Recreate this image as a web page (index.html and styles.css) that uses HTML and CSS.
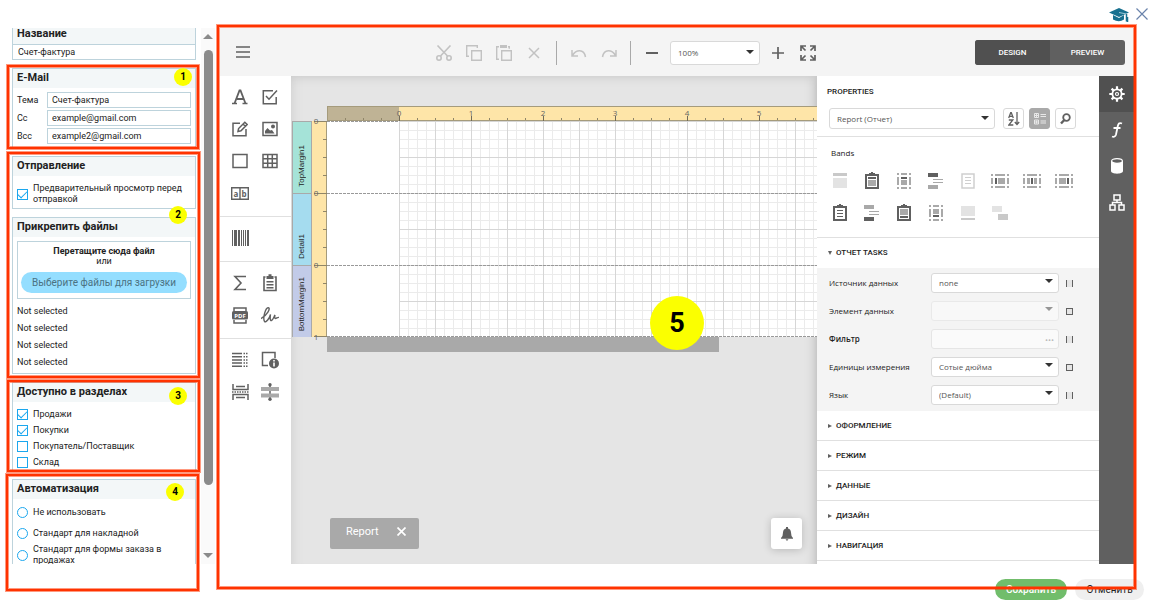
FILE: index.html
```html
<!DOCTYPE html>
<html lang="ru">
<head>
<meta charset="utf-8">
<title>Счет-фактура</title>
<link rel="stylesheet" href="styles.css">
</head>
<body>
<div class="app">
  <header class="topbar">
    <button class="icon-btn" aria-label="Обучение"><svg width="20" height="14" viewBox="0 0 20 14"><path d="M0 4.500 10 0l10 4.500L10 9z" fill="#17708f"/><path d="M4 7v4.500q6 3.500 11 0V7l-5 3z" fill="#17708f"/><path d="M10 4.500 17.500 6v4" fill="none" stroke="#9cc9d8"/><path d="M17.500 6v7.500M18.500 9v5" fill="none" stroke="#17708f" stroke-width="1.500"/></svg></button>
    <button class="icon-btn" aria-label="Закрыть"><svg width="12" height="12" viewBox="0 0 12 12"><path d="M.5.5l11 11M11.500.5l-11 11" stroke="#6a83ab" stroke-width="1.200"/></svg></button>
  </header>

  <div class="main">
    <aside class="settings">
      <div class="cards">
        <section class="card name-card">
          <h2><label for="name">Название</label></h2>
          <input class="field" id="name" value="Счет-фактура">
        </section>

        <section class="card mail-card">
          <h2>E-Mail</h2>
          <div class="mail-grid">
            <label for="subj">Тема</label><input class="field" id="subj" value="Счет-фактура">
            <label for="cc">Cc</label><input class="field" id="cc" value="example@gmail.com">
            <label for="bcc">Bcc</label><input class="field" id="bcc" value="example2@gmail.com">
          </div>
        </section>

        <section class="card send-card">
          <h2>Отправление</h2>
          <label class="check"><input type="checkbox" checked><span>Предварительный просмотр перед отправкой</span></label>
        </section>

        <section class="card files-card">
          <h2>Прикрепить файлы</h2>
          <div class="drop">
            <b>Перетащите сюда файл</b>
            <span>или</span>
            <button class="pick">Выберите файлы для загрузки</button>
          </div>
          <ul class="files">
            <li>Not selected</li><li>Not selected</li><li>Not selected</li><li>Not selected</li>
          </ul>
        </section>

        <section class="card areas-card">
          <h2>Доступно в разделах</h2>
          <div class="checks">
            <label class="check"><input type="checkbox" checked><span>Продажи</span></label>
            <label class="check"><input type="checkbox" checked><span>Покупки</span></label>
            <label class="check"><input type="checkbox"><span>Покупатель/Поставщик</span></label>
            <label class="check"><input type="checkbox"><span>Склад</span></label>
          </div>
        </section>

        <section class="card auto-card">
          <h2>Автоматизация</h2>
          <div class="radios">
            <label class="check"><input type="radio" name="auto"><span>Не использовать</span></label>
            <label class="check"><input type="radio" name="auto"><span>Стандарт для накладной</span></label>
            <label class="check"><input type="radio" name="auto"><span>Стандарт для формы заказа в продажах</span></label>
          </div>
        </section>
      </div>
      <div class="scrollbar"><i class="up"></i><i class="thumb"></i><i class="down"></i></div>
    </aside>

    <div class="designer">
      <div class="toolbar">
        <button class="tool menu" aria-label="Меню"><svg width="14" height="12" viewBox="0 0 14 12"><path d="M0 1h14M0 6h14M0 11h14" stroke="#606060" stroke-width="1.600"/></svg></button>
        <div class="tools">
          <button class="tool" aria-label="Вырезать"><svg width="16" height="16" viewBox="0 0 16 16" fill="none" stroke="#c2c2c2" stroke-width="1.600"><circle cx="3" cy="13" r="2.200"/><circle cx="13" cy="13" r="2.200"/><path d="M1.500.5 11.500 11M14.500.5 4.500 11"/></svg></button>
          <button class="tool" aria-label="Копировать"><svg width="16" height="16" viewBox="0 0 16 16" fill="none" stroke="#c2c2c2" stroke-width="1.400"><path d="M5.700 5.700h9.600v9.600H5.700zM3 11.300H.7V.7h10.600V3"/></svg></button>
          <button class="tool" aria-label="Вставить"><svg width="16" height="16" viewBox="0 0 16 16" fill="none" stroke="#c2c2c2" stroke-width="1.400"><path d="M5.700 5.700h9.600v9.600H5.700zM3 14.300H.7V1.700H3M12 1.700h1.300v2"/><path d="M4 0h7v3H4z" fill="#c2c2c2" stroke="none"/></svg></button>
          <button class="tool" aria-label="Удалить"><svg width="12" height="12" viewBox="0 0 12 12"><path d="M1 1l10 10M11 1 1 11" stroke="#c2c2c2" stroke-width="1.500"/></svg></button>
          <i class="sep"></i>
          <button class="tool" aria-label="Отменить действие"><svg width="16" height="10" viewBox="0 0 16 10" fill="none" stroke="#c2c2c2" stroke-width="1.500"><path d="M1 2v6h6M1.500 7.500C5 1.500 13 .5 14.500 9"/></svg></button>
          <button class="tool" aria-label="Повторить"><svg width="16" height="10" viewBox="0 0 16 10" fill="none" stroke="#c2c2c2" stroke-width="1.500"><path d="M15 2v6H9M14.500 7.500C11 1.500 3 .5 1.500 9"/></svg></button>
          <i class="sep last"></i>
          <button class="tool zoom-out" aria-label="Уменьшить"><svg width="12" height="12" viewBox="0 0 12 12"><path d="M0 6h12" stroke="#606060" stroke-width="2"/></svg></button>
          <span class="select zoom"><select aria-label="Масштаб"><option>100%</option></select></span>
          <button class="tool zoom-in" aria-label="Увеличить"><svg width="12" height="12" viewBox="0 0 12 12"><path d="M0 6h12M6 0v12" stroke="#606060" stroke-width="1.700"/></svg></button>
          <button class="tool" aria-label="Во весь экран"><svg width="16" height="16" viewBox="0 0 16 16" fill="none" stroke="#606060" stroke-width="1.700"><path d="M1 6V1h5M10 1h5v5M15 10v5h-5M6 15H1v-5M1 1l4.500 4.500M15 1l-4.500 4.500M15 15l-4.500-4.500M1 15l4.500-4.500"/></svg></button>
        </div>
        <div class="mode"><button class="on">DESIGN</button><button>PREVIEW</button></div>
      </div>

      <div class="work">
        <nav class="toolbox">
          <div class="group">
            <button aria-label="Label"><svg width="16" height="16" viewBox="0 0 16 16" fill="none" stroke="#606060"><path d="M2.500 14.500 7.500 1.500h1l5 13M5 10h6.500" stroke-width="1.800"/><path d="M0 14.500h5M10.500 14.500h5" stroke-width="1.500"/></svg></button>
            <button aria-label="Check Box"><svg width="16" height="16" viewBox="0 0 16 16" fill="none" stroke="#606060" stroke-width="1.500"><path d="M11 1.800H1.300v12.900h12.900V8"/><path d="M4 7l3 3.200L15 1.500"/></svg></button>
            <button aria-label="Rich Text"><svg width="16" height="16" viewBox="0 0 16 16" fill="none" stroke="#606060" stroke-width="1.500"><path d="M8 2.300H1v12.400h13V8"/><path d="M6 10.500l.6-3L12.800 1.200l2.300 2.300L9 9.800zM11 3l2.300 2.300"/></svg></button>
            <button aria-label="Picture Box"><svg width="16" height="16" viewBox="0 0 16 16"><path d="M1 1.500h14v13H1z" fill="none" stroke="#606060" stroke-width="1.500"/><circle cx="11" cy="5.500" r="2" fill="#606060"/><path d="M3 12.500V10l2.500-3L8 9.500 10 9l2.500 3.500z" fill="#606060"/></svg></button>
            <button aria-label="Panel"><svg width="16" height="16" viewBox="0 0 16 16"><path d="M1 1.500h14v13H1z" fill="none" stroke="#606060" stroke-width="1.500"/></svg></button>
            <button aria-label="Table"><svg width="16" height="16" viewBox="0 0 16 16"><path d="M1 1.500h14v13H1zM1 5.800h14M1 10.200h14M5.700 1.500v13M10.300 1.500v13" fill="none" stroke="#606060" stroke-width="1.500"/></svg></button>
            <button aria-label="Character Comb"><svg width="18" height="13" viewBox="0 0 18 13"><path d="M.7.7h16.600v11.600H.7zM9 .7v11.600" fill="none" stroke="#606060" stroke-width="1.400"/><g class="comb"><text x="2.500" y="9.500">a</text><text x="10.500" y="9.500">b</text></g></svg></button>
          </div>
          <div class="group">
            <button aria-label="Barcode"><svg width="18" height="16" viewBox="0 0 18 16" fill="#606060"><path d="M1 0h1v16H1zM3 0h3v16H3zM7 0h2v16H7zM10 0h1v16h-1zM12 0h1v16h-1zM14 0h1v16h-1zM16 0h2v16h-2z"/></svg></button>
          </div>
          <div class="group">
            <button aria-label="Summary"><svg width="16" height="16" viewBox="0 0 16 16"><path d="M14 1.500H3l6 6.500-6 6.500h11" fill="none" stroke="#606060" stroke-width="1.600"/></svg></button>
            <button aria-label="Subreport"><svg width="16" height="18" viewBox="0 0 16 18"><path d="M3.500 3H2v13.500h12V3h-1.500" fill="none" stroke="#606060" stroke-width="1.600"/><path d="M4.500 2H6.500V.3h3V2h2v3h-7zM4.500 7h7v1.400h-7zM4.500 10h7v1.400h-7zM4.500 13h7v1.400h-7z" fill="#606060"/></svg></button>
            <button aria-label="PDF Content"><svg width="16" height="17" viewBox="0 0 16 17"><path d="M2 4V1h12v3M2 13v3h12v-3" fill="none" stroke="#606060" stroke-width="1.500"/><rect y="4" width="16" height="8.500" rx="1.500" fill="#606060"/><text class="pdf" x="8" y="10.500">PDF</text></svg></button>
            <button aria-label="Signature"><svg width="18" height="16" viewBox="0 0 18 16"><path d="M0 11.500C6 8.500 10 1 7.300.7S1.500 11 3.500 14.500C5 16 8.500 11.500 9.500 7.500 9 11 9 14 10.500 13.500s2.500-4 3.500-5.500c-.5 2-.5 3.500.5 3.500S17 10 18 10.500" fill="none" stroke="#606060" stroke-width="1.400"/></svg></button>
          </div>
          <div class="group">
            <button aria-label="Table of Contents"><svg width="16" height="16" viewBox="0 0 16 16" stroke="#606060" stroke-width="1.500"><path d="M0 1.500h10M0 4.700h10M0 7.900h10M0 11.100h10M0 14.300h10"/><path d="M11.500 1.500h4.500M11.500 4.700h4.500M11.500 7.900h4.500M11.500 11.100h4.500M11.500 14.300h4.500" stroke-dasharray="1.500 1"/></svg></button>
            <button aria-label="Page Info"><svg width="18" height="18" viewBox="0 0 18 18"><path d="M14 7V1.500H1.500v13H7" fill="none" stroke="#606060" stroke-width="1.500"/><circle cx="13" cy="12.500" r="5" fill="#606060"/><path d="M13 9v1.500M13 11.500v4" stroke="#fff" stroke-width="1.600"/></svg></button>
            <button aria-label="Page Break"><svg width="17" height="18" viewBox="0 0 17 18" fill="none" stroke="#606060" stroke-width="1.500"><path d="M1 1v5.500h15V1M4 3.500h9M1 17v-5.500h15V17M4 14.500h9"/><path d="M0 9h17" stroke-dasharray="1.500 1"/></svg></button>
            <button aria-label="Cross-band"><svg width="18" height="18" viewBox="0 0 18 18"><path d="M9 1v16" stroke="#606060" stroke-width="1.500"/><path d="M0 4h18v4H0zM0 10.500h18v4H0z" fill="#a9a9a9"/><circle cx="9" cy="1.700" r="1.700" fill="#606060"/><circle cx="9" cy="16.300" r="1.700" fill="#606060"/></svg></button>
          </div>
        </nav>

        <main class="canvas">
          <div class="sheet">
            <div class="ruler-top">
              <svg width="100%" height="15">
                <defs><pattern id="ticks" width="18" height="15" patternUnits="userSpaceOnUse"><path d="M.5 12v3" stroke="#8f8568"/></pattern></defs>
                <rect width="100%" height="15" fill="#fee5a8"/><rect width="72" height="15" fill="#bfb395"/>
                <rect width="100%" height="15" fill="url(#ticks)"/>
                <path d="M0 .5h2000M0 14.500h2000M.5 0v15" stroke="#a59b7c"/>
                <path d="M72.500 10v5M144.500 10v5M216.500 10v5M288.500 10v5M360.500 10v5M432.500 10v5" stroke="#706a58"/>
                <g class="num"><text x="72" y="10">0</text><text x="144" y="10">1</text><text x="216" y="10">2</text><text x="288" y="10">3</text><text x="360" y="10">4</text><text x="432" y="10">5</text></g>
              </svg>
            </div>
            <div class="bands">
              <div class="band top"><span>TopMargin1</span></div>
              <div class="band detail"><span>Detail1</span></div>
              <div class="band bottom"><span>BottomMargin1</span></div>
            </div>
            <svg class="ruler-side" width="15" height="216">
              <rect width="15" height="216" fill="#fee5a8"/>
              <path d="M14.500 0v216" stroke="#a59b7c"/>
              <path d="M11 18.500h4M11 36.500h4M11 54.500h4M11 90.500h4M11 108.500h4M11 126.500h4M11 162.500h4M11 180.500h4M11 198.500h4M2 .5h13M2 72.500h13M2 144.500h13M2 215.500h13" stroke="#8f8568"/>
              <g class="num"><text x="4" y="3">0</text><text x="4" y="75">0</text><text x="4" y="147">0</text><text x="4" y="219">1</text></g>
            </svg>
            <svg class="page" width="100%" height="216">
              <defs>
                <pattern id="fine" width="9" height="9" patternUnits="userSpaceOnUse"><path d="M.5 0v9M0 .5h9" stroke="#ebebeb"/></pattern>
                <pattern id="major" width="36" height="36" patternUnits="userSpaceOnUse"><path d="M.5 0v36M0 .5h36" stroke="#d6d6d6"/></pattern>
              </defs>
              <rect width="100%" height="216" fill="#fff"/>
              <rect x="72" width="100%" height="216" fill="url(#fine)"/>
              <rect x="72" width="100%" height="216" fill="url(#major)"/>
              <path d="M0 .5h72M0 72.500h2000M0 144.500h2000M0 215.500h2000" stroke="#999" stroke-dasharray="3 1"/>
            </svg>
            <div class="hscroll"><i></i></div>
          </div>
          <div class="canvas-foot">
            <div class="tab"><span>Report</span><button aria-label="Закрыть вкладку"><svg width="9" height="9" viewBox="0 0 9 9"><path d="M.5.5l8 8M8.500.5l-8 8" stroke="#fff" stroke-width="1.700"/></svg></button></div>
            <button class="bell" aria-label="Уведомления"><svg width="12" height="14" viewBox="0 0 12 14" fill="#606060"><path d="M0 11q2-1.500 2-5.500Q2.200 2 5 1.500V0h2v1.500Q9.800 2 10 5.500q0 4 2 5.500v.8H0zM4.500 12.300h3L6 14z"/></svg></button>
          </div>
        </main>

        <section class="props">
          <div class="props-top">
            <h3>PROPERTIES</h3>
            <div class="props-pick">
              <span class="select"><select aria-label="Элемент"><option>Report (Отчет)</option></select></span>
              <button aria-label="Сортировка"><svg width="12" height="14" viewBox="0 0 12 14" fill="none" stroke="#606060" stroke-width="1.300"><path d="M.7 6 2.700.7h.6L5.300 6M1.500 4.300h3M.8 8h4L.8 13h4.500M9 0v12M6.800 10 9 12.500 11.200 10"/></svg></button>
              <button class="on" aria-label="По категориям"><svg width="12" height="12" viewBox="0 0 12 12" fill="none" stroke="#e8e8e8"><path d="M.5.5h4v4h-4zM.5 7h4v4h-4zM2.500 1v3M1 2.500h3M2.500 7.500v3M1 9h3M6.500 1.500H12M6.500 3.500H12M6.500 8H12M6.500 10H12"/></svg></button>
              <button aria-label="Поиск"><svg width="11" height="12" viewBox="0 0 11 12" fill="none" stroke="#606060"><circle cx="6.500" cy="4.500" r="3.300" stroke-width="1.800"/><path d="M4.300 7 1 10.500" stroke-width="2.400"/></svg></button>
            </div>
          </div>
          <div class="bands-box">
            <h4>Bands</h4>
            <div class="band-icons">
              <svg viewBox="0 0 18 18"><path fill="#c9c9c9" d="M2 1h14v3H2z"/><path fill="#e3e3e3" d="M2 6h14v10H2z"/></svg>
              <svg viewBox="0 0 18 18"><path fill="none" stroke="#606060" stroke-width="2" d="M3 3h12v13H3z"/><path fill="#606060" d="M6 1h2V0h2v1h2v3H6zM5 5h8v2H5z"/><path fill="#a9a9a9" d="M5 8h8v6H5z"/></svg>
              <svg viewBox="0 0 18 18"><path fill="#a9a9a9" d="M2 1h2v2H2zM6 1h6v2H6zM14 1h2v2h-2zM2 5h2v8H2zM6 8h6v5H6zM14 5h2v8h-2zM2 15h2v2H2zM6 15h6v2H6zM14 15h2v2h-2z"/><path fill="#606060" d="M6 5h6v2H6z"/></svg>
              <svg viewBox="0 0 18 18"><path fill="#606060" d="M1 1h10v4H1z"/><path fill="#a9a9a9" d="M6 7h10v1H6zM6 10h10v1H6zM1 13h10v4H1z"/></svg>
              <svg viewBox="0 0 18 18"><path fill="none" stroke="#cfcfcf" stroke-width="1.500" d="M3 2h12v14H3z"/><path fill="#cfcfcf" d="M6 5h6v1H6zM6 8h6v1H6zM6 11h6v1H6z"/></svg>
              <svg viewBox="0 0 18 18"><path fill="#a9a9a9" d="M0 2h2v2H0zM4 2h10v2H4zM16 2h2v2h-2zM0 6h2v6H0zM7 6h7v6H7zM16 6h2v6h-2zM0 14h2v2H0zM4 14h10v2H4zM16 14h2v2h-2z"/><path fill="#606060" d="M4 6h2v6H4z"/></svg>
              <svg viewBox="0 0 18 18"><path fill="#a9a9a9" d="M0 2h2v2H0zM4 2h10v2H4zM16 2h2v2h-2zM0 6h2v6H0zM4 6h3v6H4zM11 6h3v6h-3zM16 6h2v6h-2zM0 14h2v2H0zM4 14h10v2H4zM16 14h2v2h-2z"/><path fill="#606060" d="M8 6h2v6H8z"/></svg>
              <svg viewBox="0 0 18 18"><path fill="#a9a9a9" d="M0 2h2v2H0zM4 2h10v2H4zM16 2h2v2h-2zM0 6h2v6H0zM4 6h7v6H4zM16 6h2v6h-2zM0 14h2v2H0zM4 14h10v2H4zM16 14h2v2h-2z"/><path fill="#606060" d="M12 6h2v6h-2z"/></svg>
              <svg viewBox="0 0 18 18"><path fill="none" stroke="#606060" stroke-width="2" d="M3 3h12v13H3z"/><path fill="#606060" d="M6 1h2V0h2v1h2v3H6zM6 6h6v1H6zM6 9h6v1H6zM6 12h6v1H6z"/></svg>
              <svg viewBox="0 0 18 18"><path fill="#606060" d="M1 13h10v4H1z"/><path fill="#a9a9a9" d="M6 7h10v1H6zM6 10h10v1H6zM1 1h10v4H1z"/></svg>
              <svg viewBox="0 0 18 18"><path fill="none" stroke="#606060" stroke-width="2" d="M3 3h12v13H3z"/><path fill="#606060" d="M6 1h2V0h2v1h2v3H6zM5 12h8v2H5z"/><path fill="#a9a9a9" d="M5 5h8v6H5z"/></svg>
              <svg viewBox="0 0 18 18"><path fill="#a9a9a9" d="M2 1h2v2H2zM6 1h6v2H6zM14 1h2v2h-2zM2 5h2v8H2zM6 5h6v5H6zM14 5h2v8h-2zM2 15h2v2H2zM6 15h6v2H6zM14 15h2v2h-2z"/><path fill="#606060" d="M6 11h6v2H6z"/></svg>
              <svg viewBox="0 0 18 18"><path fill="#e3e3e3" d="M2 2h14v10H2z"/><path fill="#c9c9c9" d="M2 14h14v2H2z"/></svg>
              <svg viewBox="0 0 18 18"><path fill="#e3e3e3" d="M1 2h10v6H1z"/><path fill="#c9c9c9" d="M7 10h10v6H7z"/></svg>
            </div>
          </div>
          <button class="acc open">ОТЧЕТ TASKS</button>
          <div class="form">
            <label for="src">Источник данных</label><span class="select"><select id="src"><option>none</option></select></span><i class="mark side"></i>
            <label for="member">Элемент данных</label><span class="select off"><select id="member" disabled></select></span><i class="mark"></i>
            <label class="strong" for="filter">Фильтр</label><input class="filter" id="filter" placeholder="•••" disabled><i class="mark side"></i>
            <label for="units">Единицы измерения</label><span class="select"><select id="units"><option>Сотые дюйма</option></select></span><i class="mark"></i>
            <label for="lang">Язык</label><span class="select"><select id="lang"><option>(Default)</option></select></span><i class="mark side"></i>
          </div>
          <button class="acc">ОФОРМЛЕНИЕ</button>
          <button class="acc">РЕЖИМ</button>
          <button class="acc">ДАННЫЕ</button>
          <button class="acc">ДИЗАЙН</button>
          <button class="acc">НАВИГАЦИЯ</button>
        </section>

        <nav class="rail">
          <button class="on" aria-label="Свойства"><svg width="16" height="16" viewBox="0 0 16 16" fill="none" stroke="#fff"><circle cx="8" cy="8" r="4.600" stroke-width="1.800"/><circle cx="8" cy="8" r="1.500" stroke-width="1.200"/><path d="M8 .3v3M8 12.700v3M.3 8h3M12.700 8h3M2.600 2.600l2 2M11.400 11.400l2 2M13.400 2.600l-2 2M4.600 11.400l-2 2" stroke-width="2.200"/></svg></button>
          <button aria-label="Выражения"><svg width="12" height="16" viewBox="0 0 12 16" fill="none" stroke="#fff" stroke-width="1.800"><path d="M11 1.500C8 .2 7.300 2 6.800 4L5 12.500C4.500 14.500 3 15.300 1 14.500M2.500 6h7"/></svg></button>
          <button aria-label="Источники"><svg width="12" height="16" viewBox="0 0 12 16"><path d="M0 3v10c0 3.500 12 3.500 12 0V3z" fill="#fff"/><ellipse cx="6" cy="3" rx="5.400" ry="2.300" fill="#606060" stroke="#fff" stroke-width="1.200"/></svg></button>
          <button aria-label="Структура"><svg width="16" height="17" viewBox="0 0 16 17" fill="none" stroke="#fff" stroke-width="1.500"><path d="M5 1h6v5H5zM1 11h5v5H1zM10 11h5v5h-5zM8 6v2.500M3.500 11V8.500h9V11"/></svg></button>
        </nav>
      </div>
    </div>
  </div>

  <footer class="foot"><button class="save">Сохранить</button><button>Отменить</button></footer>
</div>

<div class="frame f1"></div><div class="frame f2"></div><div class="frame f3"></div><div class="frame f4"></div><div class="frame f5"></div>
<span class="badge b1">1</span><span class="badge b2">2</span><span class="badge b3">3</span><span class="badge b4">4</span><span class="badge b5">5</span>
</body>
</html>
```

FILE: styles.css
```css
* { box-sizing: border-box; }
body { margin: 0; background: #fff; color: #222; font: 9px/11px Roboto, "Liberation Sans", sans-serif; overflow: hidden; }
button { border: 0; padding: 0; background: none; font: inherit; color: inherit; cursor: pointer; }
h2, h3, h4, ul { margin: 0; padding: 0; list-style: none; }
svg { display: block; }

.app { display: flex; flex-direction: column; height: 100vh; }
.topbar { flex: none; height: 28px; padding: 8px 8px 0 0; display: flex; justify-content: flex-end; align-items: flex-start; gap: 7px; }
.main { flex: 1; min-height: 0; display: flex; }

/* Settings column */
.settings { flex: none; width: 220px; padding-left: 12px; display: flex; gap: 5px; overflow: hidden; }
.cards { width: 184px; height: 100%; overflow: hidden; display: flex; flex-direction: column; gap: 8px; }
.card { flex: none; border: 1px solid #bdd3dc; }
.card h2 { height: 19px; padding-left: 4px; background: #f3f7f8; font-size: 11px; line-height: 18px; font-weight: 700; }
.name-card { margin-top: -4px; }
.field { width: 100%; height: 16px; padding: 0 4px; border: 1px solid #bdd3dc; background: #fff; font: inherit; color: inherit; }
.name-card .field { display: block; height: 15px; border-width: 1px 0 0; padding-left: 5px; }
.mail-grid { display: grid; grid-template-columns: 30px 1fr; gap: 2px 0; align-items: center; padding: 4px 4px 3px; }
.check { display: flex; align-items: center; gap: 5px; }
.check input { appearance: none; flex: none; width: 11px; height: 11px; margin: 0; border: 1px solid #1ba7ee; background: #fff; display: grid; place-items: center; }
.check input[type=radio] { border-radius: 50%; }
.check input:checked::after { content: ""; width: 8px; height: 4px; margin-bottom: 2px; border: solid #1ba7ee; border-width: 0 0 1px 1px; transform: rotate(-45deg); }
.send-card .check { padding: 7px 4px 3px; }
.drop { margin: 4px 4px 0; height: 58px; border: 1px solid #bdd3dc; display: flex; flex-direction: column; align-items: center; padding: 4px 3px; line-height: 10px; }
.pick { width: 100%; height: 21px; margin-top: 6px; border-radius: 11px; background: #94deff; color: #4b7282; font-size: 10px; }
.files { padding: 4px 4px 2px; line-height: 17px; }
.checks { padding: 4px; display: grid; grid-auto-rows: 16px; }
.areas-card { height: 89px; }
.radios { padding: 3px 16px 3px 4px; display: flex; flex-direction: column; }
.radios .check { min-height: 21px; }
.scrollbar { width: 14px; padding: 6px 0 6px; background: #fafafa; display: flex; flex-direction: column; align-items: center; }
.up, .down { border: 5px solid transparent; }
.up { border-top: 0; border-bottom-color: #8b8b8b; }
.down { border-bottom: 0; border-top-color: #8b8b8b; margin-top: auto; }
.thumb { width: 9px; height: 83%; margin-top: 11px; border-radius: 5px; background: #8b8b8b; }

/* Designer */
.designer { flex: 1; min-width: 0; margin-right: 22px; display: flex; flex-direction: column; }
.toolbar { flex: none; height: 48px; padding: 0 9px 0 8px; background: #f4f4f4; display: flex; align-items: center; }
.tool { flex: none; width: 30px; height: 30px; display: grid; place-items: center; }
.tools { margin-left: 171px; padding-top: 2px; display: flex; align-items: center; }
.sep { width: 1px; height: 24px; margin: 0 7px; background: #a9a9a9; }
.sep.last { margin: 0 6px; }
.select { position: relative; display: block; height: 20px; }
.select::after { content: ""; position: absolute; right: 6px; top: 6px; border: 4px solid transparent; border-top-color: #333; border-bottom: 0; pointer-events: none; }
.select select { appearance: none; width: 100%; height: 100%; padding: 0 7px; border: 1px solid #d9d9d9; border-radius: 3px; background: #fff; color: #555; font: 8px/12px "Open Sans", sans-serif; }
.select.zoom { width: 90px; height: 24px; margin: 0 3px; }
.zoom.select::after { top: 9px; }
.mode { width: 150px; height: 25px; margin-left: auto; display: flex; border-radius: 3px; overflow: hidden; background: #606060; color: #fff; font-size: 8px; font-weight: 500; }
.mode button { flex: 1; }
.mode .on { background: #505050; }
.work { flex: 1; min-height: 0; display: flex; }

.toolbox { flex: none; width: 71px; background: #fff; }
.group { padding: 5px 6px 7px 5px; border-bottom: 1px solid #e0e0e0; display: grid; grid-template-columns: 30px 30px; grid-auto-rows: 32px; }
.group:last-child { border: 0; }
.group button { display: grid; place-items: center; }
.comb { font: 700 8px "Open Sans", sans-serif; fill: #606060; }
.pdf { font: 700 6px "Open Sans", sans-serif; fill: #fff; text-anchor: middle; }

.canvas { flex: 1; min-width: 0; display: flex; flex-direction: column; background: #e5e5e5; box-shadow: inset 0 10px 10px -8px #ccc, inset 12px 0 12px -12px #ccc, inset -12px 0 12px -12px #aaa; padding-top: 30px; }
.sheet { margin-left: 1px; display: grid; grid-template-columns: 20px 15px minmax(0, 1fr); grid-template-rows: 15px 216px 15px; overflow: hidden; }
.ruler-top { grid-column: 3; }
.bands { grid-row: 2; display: grid; grid-template-rows: 72px 72px 72px; border-left: 1px solid #a9a9a9; border-right: 1px solid #a9a9a9; }
.band { border-top: 1px solid #a9a9a9; display: flex; align-items: flex-end; padding-bottom: 6px; }
.band span { writing-mode: vertical-rl; rotate: 180deg; font: 8px/18px "Liberation Sans", sans-serif; }
.top { background: #a5e3d8; }
.detail { background: #a5dcef; }
.bottom { background: #c2cbe8; }
.num { font: 8px "Open Sans", sans-serif; fill: #666; text-anchor: middle; }
.ruler-side { overflow: visible; }
.hscroll { grid-column: 3; }
.hscroll i { display: block; width: 80%; height: 15px; background: #a9a9a9; }
.canvas-foot { margin-top: auto; padding: 0 15px 15px 39px; display: flex; justify-content: space-between; }
.tab { width: 89px; height: 31px; padding: 0 13px 4px 16px; border-radius: 2px; background: #a9a9a9; color: #fff; display: flex; align-items: center; justify-content: space-between; font-size: 11px; }
.bell { width: 31px; height: 31px; border-radius: 3px; background: #fff; box-shadow: 0 1px 8px #0003; display: grid; place-items: center; }

/* Properties */
.props { flex: none; width: 282px; background: #fff; font: 8px/12px "Open Sans", sans-serif; display: flex; flex-direction: column; overflow: hidden; }
.props-top { flex: none; height: 61px; padding: 10px 10px 0; border-bottom: 1px solid #e0e0e0; }
h3 { font: 500 8px/12px Roboto, sans-serif; }
.props-pick { margin: 10px 0 0 2px; display: flex; gap: 5px; }
.props-pick .select { width: 166px; height: 21px; margin-right: 3px; }
.props-pick .select::after { top: 8px; }
.props-pick button { width: 21px; height: 21px; border: 1px solid #d9d9d9; border-radius: 3px; display: grid; place-items: center; }
.props-pick .on { background: #a9a9a9; border-color: #a9a9a9; }
.bands-box { flex: none; height: 101px; padding: 10px 14px; border-bottom: 1px solid #e0e0e0; }
h4 { font-size: 8px; line-height: 12px; font-weight: 400; }
.band-icons { margin-top: 13px; display: grid; grid-template-columns: repeat(8, 18px); gap: 14px; }
.acc { flex: none; height: 30px; padding-left: 11px; border-bottom: 1px solid #e0e0e0; display: flex; align-items: center; gap: 4px; font: 500 8px/12px Roboto, sans-serif; }
.acc::before { content: ""; border: 2px solid transparent; border-left: 4px solid #606060; border-right: 0; }
.acc.open { border: 0; }
.acc.open::before { border: 2px solid transparent; border-top: 4px solid #606060; border-bottom: 0; }
.form { flex: none; background: #f4f4f4; padding: 5px 24px 6px 12px; display: grid; grid-template-columns: 102px 128px 8px; grid-auto-rows: 20px; gap: 8px 0; align-items: center; }
.form .mark { margin-left: 7px; }
.strong { font-weight: 600; }
.off::after { opacity: .5; }
.off select { background: #fafafa; border-color: #e5e5e5; }
.filter { width: 100%; height: 20px; border: 1px solid #e5e5e5; border-radius: 3px; background: #fafafa; text-align: right; padding: 0 4px; font: 8px "Open Sans", sans-serif; }
.filter::placeholder { color: #bbb; }
.mark { width: 7px; height: 7px; border: 1px solid #606060; background: #e5e5e5; }
.mark.side { border-width: 0 1px; }

.rail { flex: none; width: 35px; background: #606060; display: flex; flex-direction: column; }
.rail button { height: 36px; display: grid; place-items: center; }
.rail .on { background: #505050; }

.foot { flex: none; height: 41px; padding: 15px 12px 0; display: flex; justify-content: flex-end; gap: 8px; }
.foot button { width: 69px; height: 21px; border-radius: 11px; background: #efefef; color: #222; font-size: 10px; }
.foot .save { width: 72px; background: #71bd6b; color: #fff; font-weight: 500; }

/* Callouts laid over the window */
.frame { position: absolute; border: 2px solid #ff3300; box-shadow: 0 0 0 1px #ff330080, inset 0 0 0 1px #ff330080; pointer-events: none; }
.f1 { left: 7px; top: 65px; width: 192px; height: 84px; }
.f2 { left: 7px; top: 152px; width: 193px; height: 226px; }
.f3 { left: 7px; top: 380px; width: 193px; height: 92px; }
.f4 { left: 6px; top: 474px; width: 193px; height: 117px; }
.f5 { left: 217px; top: 25px; right: 20px; bottom: 16px; }
.badge { position: absolute; width: 18px; height: 18px; border-radius: 50%; background: #fbff00; color: #000; font: 700 10px/18px Roboto, sans-serif; text-align: center; }
.b1 { left: 174px; top: 68px; }
.b2 { left: 169px; top: 206px; }
.b3 { left: 169px; top: 387px; }
.b4 { left: 166px; top: 483px; }
.b5 { left: 650px; top: 296px; width: 54px; height: 54px; font-size: 27px; line-height: 54px; }
```
